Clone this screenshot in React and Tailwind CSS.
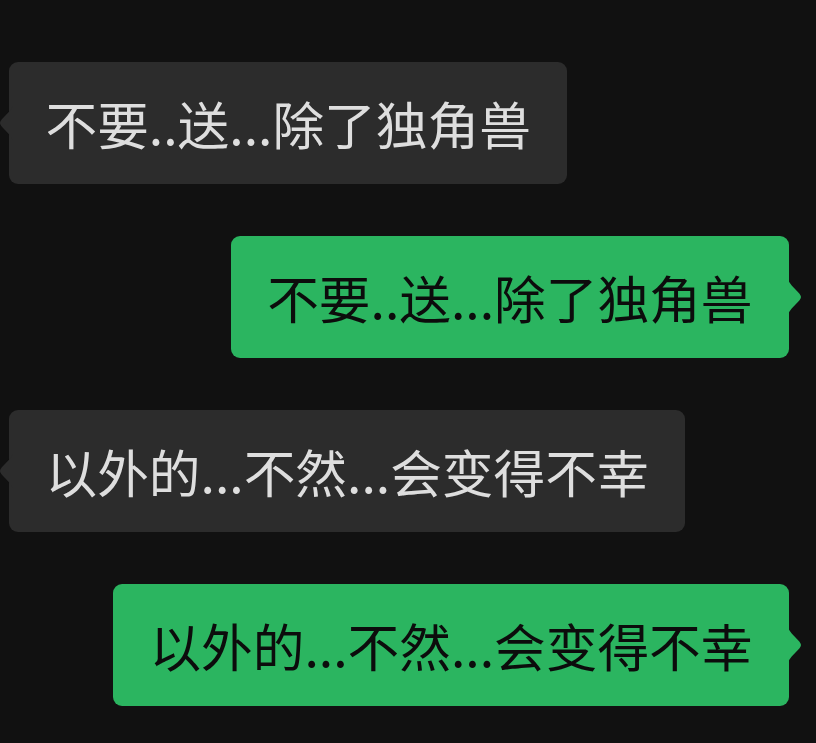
import React from 'react';

const messages = [
  { side: 'left', text: '不要..送...除了独角兽' },
  { side: 'right', text: '不要..送...除了独角兽' },
  { side: 'left', text: '以外的...不然...会变得不幸' },
  { side: 'right', text: '以外的...不然...会变得不幸' },
];

// little pointer on the bubble edge
const Tail = ({ side, color }) => (
  <svg
    width="14"
    height="34"
    viewBox="0 0 14 34"
    className={side === 'left' ? 'absolute top-1/2 -translate-y-1/2 -left-[10px]' : 'absolute top-1/2 -translate-y-1/2 -right-[13px]'}
  >
    {side === 'left' ? (
      <path d="M14 0 C10 8 1 13 1 17 C1 21 10 26 14 34 Z" fill={color} />
    ) : (
      <path d="M0 0 C4 8 13 13 13 17 C13 21 4 26 0 34 Z" fill={color} />
    )}
  </svg>
);

const Bubble = ({ side, text }) => {
  const mine = side === 'right';
  return (
    <div className={mine ? 'flex justify-end' : 'flex justify-start'}>
      <div
        className={
          mine
            ? 'relative rounded-[9px] bg-[#2bb560] text-[#0c0c0c] px-[36.5px] py-[22px] text-[51.7px] leading-[78px]'
            : 'relative rounded-[9px] bg-[#2c2c2c] text-[#dedede] px-[36.5px] py-[22px] text-[51.7px] leading-[78px]'
        }
      >
        <Tail side={side} color={mine ? '#2bb560' : '#2c2c2c'} />
        {text}
      </div>
    </div>
  );
};

export default function App() {
  return (
    <div
      className="w-[816px] h-[743px] bg-[#111111] overflow-hidden pt-[62px] pl-[9px] pr-[27px] flex flex-col gap-[52px]"
      style={{ fontFamily: '"Noto Sans CJK SC", "Noto Sans", sans-serif' }}
    >
      {messages.map((m, i) => (
        <Bubble key={i} side={m.side} text={m.text} />
      ))}
    </div>
  );
}
